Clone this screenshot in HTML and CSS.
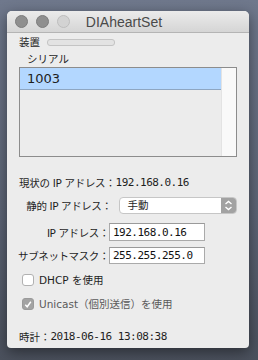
FILE: index.html
```html
<!DOCTYPE html>
<html lang="ja">
<head>
    <meta charset="UTF-8">
    <title>DIAheartSet</title>
    <link rel="stylesheet" href="styles.css">
</head>
<body>

    <div class="window">
        <div class="titlebar">
            <div class="lights">
                <span class="light"></span>
                <span class="light"></span>
                <span class="light off"></span>
            </div>
            <div class="title">DIAheartSet</div>
            <div></div>
        </div>

        <div class="content">
            <div class="row device">
                <span>装置</span>
                <span class="progress"></span>
            </div>

            <div class="row serial">シリアル</div>
            <div class="list">
                <div class="items">
                    <div class="item selected">1003</div>
                </div>
                <div class="scroller"></div>
            </div>

            <div class="row current">
                <span class="tight">現状の IP アドレス：</span><span class="mono">192.168.0.16</span>
            </div>

            <div class="field-row static">
                <span class="label">静的 IP アドレス：</span>
                <div class="popup">
                    <span class="popup-text">手動</span>
                    <span class="popup-arrows">
                        <svg width="9" height="11" viewBox="0 0 9 11">
                            <path d="M1.5 4 L4.5 1.5 L7.5 4 M1.5 7 L4.5 9.5 L7.5 7" fill="none" stroke="#fff" stroke-width="1.4"/>
                        </svg>
                    </span>
                </div>
            </div>

            <div class="field-row ip">
                <span class="label">IP アドレス：</span>
                <div class="input mono">192.168.0.16</div>
            </div>

            <div class="field-row mask">
                <span class="label">サブネットマスク：</span>
                <div class="input mono">255.255.255.0</div>
            </div>

            <div class="row check dhcp">
                <span class="box"></span>
                <span>DHCP を使用</span>
            </div>

            <div class="row check unicast">
                <span class="box checked">
                    <svg width="11" height="11" viewBox="0 0 11 11">
                        <path d="M2.5 5.8 L4.6 8 L8.6 2.5" fill="none" stroke="#fff" stroke-width="1.6"/>
                    </svg>
                </span>
                <span class="dim">Unicast（個別送信）を使用</span>
            </div>

            <div class="row clock">
                <span>時計：</span><span class="mono">2018-06-16 13:08:38</span>
            </div>
        </div>
    </div>

</body>
</html>
```

FILE: styles.css
```css
body {
    margin: 0;
    width: 258px;
    height: 360px;
    padding: 11px 0 0 7px;
    box-sizing: border-box;
    background: linear-gradient(180deg, #6f788c 0%, #5c6475 60%, #4b515d 100%);
    font-family: "DejaVu Sans", "Noto Sans CJK JP", sans-serif;
    font-size: 10.5px;
    color: #1e1e1e;
}
.window {
    width: 242px;
    height: 337px;
    background: #ececec;
    border-radius: 5px 5px 4px 4px;
    box-shadow: 0 4px 14px rgba(0, 0, 0, 0.45);
    overflow: hidden;
}
.titlebar {
    height: 21px;
    display: grid;
    grid-template-columns: 66px 1fr 74px;
    align-items: center;
    background: linear-gradient(180deg, #ebebeb, #d5d5d5);
    border-bottom: 1px solid #b4b4b4;
}
.lights {
    display: flex;
    gap: 8px;
    padding-left: 8px;
}
.light {
    width: 11px;
    height: 11px;
    border-radius: 50%;
    background: #8f8f8f;
    border: 0.5px solid #7c7c7c;
}
.light.off {
    background: #d3d3d3;
    border-color: #bdbdbd;
}
.title {
    text-align: center;
    font-family: "Liberation Sans", "Noto Sans", sans-serif;
    font-size: 14px;
    color: #4a4a4a;
}
.content {
    padding: 2px 12px 0 12px;
}
.row {
    height: 14px;
    line-height: 14px;
    display: flex;
    align-items: center;
    white-space: nowrap;
}
.progress {
    width: 66px;
    height: 5px;
    margin-left: 7px;
    border-radius: 3px;
    border: 1px solid #c4c4c4;
    background: #e3e3e3;
}
.serial {
    margin-top: 3px;
    padding-left: 8px;
}
.list {
    margin-top: 1px;
    width: 218px;
    height: 90px;
    box-sizing: border-box;
    border: 1px solid #8c8c8c;
    background: #ececec;
    display: flex;
}
.items {
    flex: 1;
}
.item {
    height: 21px;
    line-height: 21px;
    padding-left: 7px;
    font-size: 13px;
    font-family: "DejaVu Sans", sans-serif;
}
.selected {
    background: #b3d7ff;
    border-bottom: 1px solid #8ea6c2;
}
.scroller {
    width: 14px;
    background: #f9f9f9;
    border-left: 1px solid #e3e3e3;
}
.mono {
    font-family: "DejaVu Sans Mono", monospace;
    font-size: 11px;
    letter-spacing: -0.5px;
}
.tight {
    letter-spacing: -0.3px;
}
.current {
    margin-top: 19px;
}
.field-row {
    display: flex;
    align-items: center;
    white-space: nowrap;
}
.label {
    display: flex;
    justify-content: flex-end;
    box-sizing: border-box;
    letter-spacing: -0.4px;
}
.static {
    margin-top: 6px;
    height: 18px;
}
.static .label {
    width: 100px;
    padding-right: 7px;
}
.popup {
    width: 119px;
    height: 17px;
    box-sizing: border-box;
    border: 1px solid #c6c6c6;
    border-radius: 4px;
    background: #fff;
    display: flex;
    overflow: hidden;
}
.popup-text {
    flex: 1;
    padding-left: 8px;
    line-height: 15px;
}
.popup-arrows {
    width: 15px;
    background: #a2a2a2;
    display: flex;
    align-items: center;
    justify-content: center;
}
.ip {
    margin-top: 9px;
}
.ip .label,
.mask .label {
    width: 90px;
    padding-right: 0;
}
.input {
    width: 96px;
    height: 18px;
    line-height: 17px;
    box-sizing: border-box;
    border: 1px solid #aaaaaa;
    border-top-color: #9a9a9a;
    background: #fff;
    padding-left: 3px;
    color: #111;
}
.mask {
    margin-top: 6px;
}
.mask .input {
    height: 17px;
    line-height: 16px;
}
.check {
    padding-left: 3px;
}
.dhcp {
    margin-top: 9px;
}
.box {
    width: 12px;
    height: 12px;
    box-sizing: border-box;
    border: 1px solid #b1b1b1;
    border-radius: 3px;
    background: #fff;
    margin-right: 5px;
    display: flex;
    align-items: center;
    justify-content: center;
}
.box.checked {
    background: #a3a3a3;
    border-color: #9a9a9a;
}
.dim {
    color: #5a5a5a;
}
.unicast {
    margin-top: 10px;
}
.clock {
    margin-top: 19px;
}
```
